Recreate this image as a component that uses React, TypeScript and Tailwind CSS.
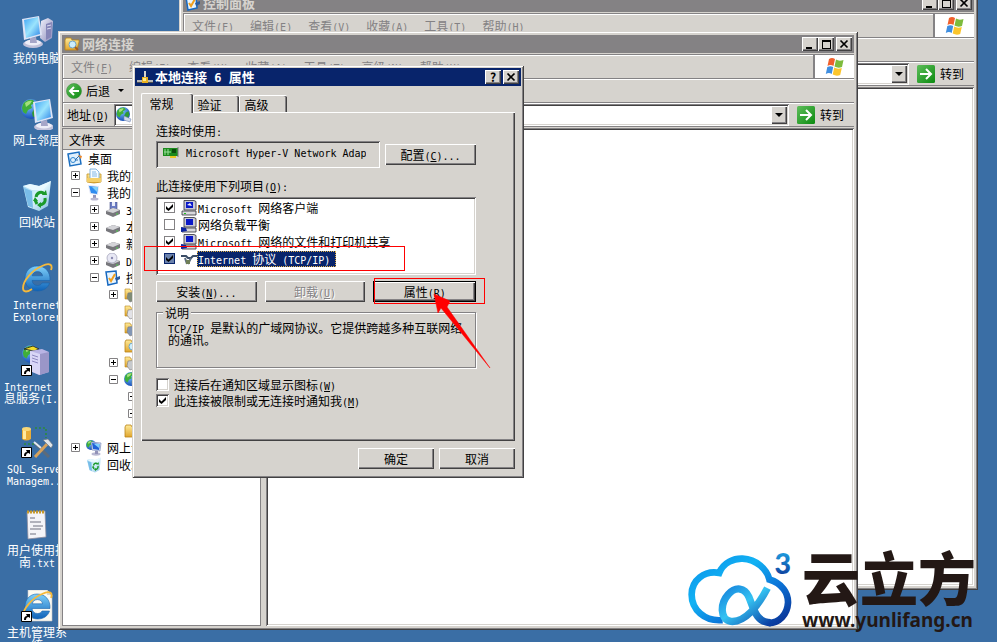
import type { ReactNode } from "react";

const RAISED =
  "bg-[#d6d3ce] shadow-[inset_1px_1px_0_#fff,inset_-1px_-1px_0_#424142,inset_-2px_-2px_0_#848284]";
const SUNKEN =
  "shadow-[inset_1px_1px_0_#848284,inset_-1px_-1px_0_#fff,inset_2px_2px_0_#424142,inset_-2px_-2px_0_#d6d3ce]";
const FRAME =
  "bg-[#d6d3ce] shadow-[inset_1px_1px_0_#d6d3ce,inset_-1px_-1px_0_#424142,inset_2px_2px_0_#fff,inset_-2px_-2px_0_#848284]";
const MONO = "font-['DejaVu_Sans_Mono','Noto_Sans_CJK_SC',monospace]";

// Half width characters take half of a Chinese character, "&" marks the hotkey.
function T({ children }: { children: string }) {
  const parts = children.split(/([\x20-\x7e]+)/).filter(Boolean);
  return (
    <span className="whitespace-pre">
      {parts.map((part, i) => {
        if (!/^[\x20-\x7e]/.test(part)) return part;
        const [before, after] = part.split("&");
        return (
          <span key={i} className={`text-[10px] leading-[0px] ${MONO}`}>
            {before}
            {after && <u>{after[0]}</u>}
            {after && after.slice(1)}
          </span>
        );
      })}
    </span>
  );
}

/* ---------- icons ---------- */

function Defs() {
  return (
    <svg className="absolute size-0" aria-hidden="true">
      <defs>
        <linearGradient id="screen" x1="0" y1="0" x2="1" y2="1">
          <stop offset="0" stopColor="#3fa4f4" />
          <stop offset=".5" stopColor="#9be4fd" />
          <stop offset="1" stopColor="#2b84e8" />
        </linearGradient>
        <linearGradient id="case" x1="0" y1="0" x2="1" y2="1">
          <stop offset="0" stopColor="#f1f1fb" />
          <stop offset="1" stopColor="#8c8cbc" />
        </linearGradient>
        <linearGradient id="ie" x1="0" y1="0" x2="0" y2="1">
          <stop offset="0" stopColor="#7fd0fa" />
          <stop offset="1" stopColor="#0d62b8" />
        </linearGradient>
        <linearGradient id="gold" x1="0" y1="0" x2="0" y2="1">
          <stop offset="0" stopColor="#ffeb9a" />
          <stop offset="1" stopColor="#e0a52c" />
        </linearGradient>
        <linearGradient id="go" x1="0" y1="0" x2="1" y2="1">
          <stop offset="0" stopColor="#5fbe5b" />
          <stop offset="1" stopColor="#0b8a10" />
        </linearGradient>
        <radialGradient id="globe" cx=".4" cy=".3" r=".8">
          <stop offset="0" stopColor="#7cc8ff" />
          <stop offset="1" stopColor="#0a3fae" />
        </radialGradient>
        <linearGradient id="bin" x1="0" y1="0" x2="1" y2="1">
          <stop offset="0" stopColor="#8fcdf0" />
          <stop offset=".5" stopColor="#dff5fd" />
          <stop offset="1" stopColor="#7db9e0" />
        </linearGradient>
        <linearGradient id="cloud" x1="0" y1="0" x2="1" y2="1">
          <stop offset="0" stopColor="#0a8fe8" />
          <stop offset=".35" stopColor="#12b3f4" />
          <stop offset=".65" stopColor="#0b74d8" />
          <stop offset="1" stopColor="#0a2f92" />
        </linearGradient>
        <linearGradient id="alpha" x1="0" y1="0" x2="1" y2="1">
          <stop offset="0" stopColor="#1583dc" />
          <stop offset=".45" stopColor="#35c3f2" />
          <stop offset="1" stopColor="#0a3fa4" />
        </linearGradient>
        <linearGradient id="three" x1="0" y1="0" x2="0" y2="1">
          <stop offset="0" stopColor="#22b8f2" />
          <stop offset="1" stopColor="#0a2f92" />
        </linearGradient>
      </defs>
    </svg>
  );
}

function Svg({ box = 32, className, children }: { box?: number; className: string; children: ReactNode }) {
  return (
    <svg viewBox={`0 0 ${box} ${box}`} className={`shrink-0 ${className}`} aria-hidden="true">
      {children}
    </svg>
  );
}

const Globe = ({ x = 10, y = 10, r = 10 }) => (
  <g transform={`translate(${x} ${y}) scale(${r / 10})`}>
    <circle r="10" fill="url(#globe)" />
    <path d="M-8-5 Q-4-10 2-9 L4-6 0-4 1-1-3 1-5 5-8 3-9-1Z" fill="#3fae3a" />
    <path d="M4-2 8-4 9 1 6 7 2 8 1 4Z" fill="#2f9a34" />
    <path d="M-6-6 Q-2-9 1-8 L-1-5-5-2Z" fill="#a4df7c" />
  </g>
);

const Monitor = () => (
  <g>
    <ellipse cx="12" cy="28" rx="10" ry="4" fill="#c2c2da" />
    <ellipse cx="12" cy="26.500" rx="8" ry="3" fill="#eeeef8" />
    <path d="M9 22 15 21 16 27 9 27Z" fill="#a6a6c8" />
    <path d="M1 3 18 0 21 19 3 24Z" fill="#dfe4f6" />
    <path d="M3 4 17 1 19 18 5 22Z" fill="url(#screen)" />
  </g>
);

const Shortcut = () => (
  <g>
    <path d="M.5 21.500h10v10H.5Z" fill="#fff" stroke="#000" />
    <path d="M3 30C3 27 4 26 6 26L5 24H9V28L7.500 27C6 27 5 28 5 30Z" fill="#000" />
  </g>
);

const IeMark = () => (
  <g>
    <path
      d="M16 4C8.500 4 4 10 4 16.500 4 24 9.500 29 16.500 29 22.500 29 27 26 28.500 21H21C20 22.800 18.500 23.500 16.500 23.500 13.500 23.500 11.300 21.500 11 18.500H29C29.500 10 24.500 4 16 4ZM11.200 13.800C11.800 11 14 9.600 16.400 9.600 19 9.600 21.200 11 21.600 13.800Z"
      fill="url(#ie)"
      stroke="#1a63ac"
      strokeWidth=".6"
    />
    <path
      d="M30 8C32 3 29 0 21 4 11 8 2 19 2 26 2 31 7 30 11 27"
      fill="none"
      stroke="#f6b93a"
      strokeWidth="1.800"
    />
  </g>
);

const DesktopComputer = () => (
  <Svg className="size-8">
    <path d="M20 5 27 2 32 5 31 22 24 26 19 22Z" fill="url(#case)" />
    <path d="M25 8 31 6 30 21 25 24Z" fill="#8585b8" />
    <path d="M26 10 30 9M26 13 30 12" stroke="#dcdcf2" />
    <Monitor />
  </Svg>
);

const NetworkPlaces = ({ className = "size-8" }) => (
  <Svg className={className}>
    <Globe x={10} y={11} r={10} />
    <g transform="translate(11 1)">
      <Monitor />
    </g>
  </Svg>
);

const RecycleBin = ({ className = "size-8" }) => (
  <Svg className={className}>
    <path d="M2 6 9 4 18 6 30 1 27 26 18 31 7 27Z" fill="url(#bin)" />
    <path d="M2 6 9 4 18 6 30 1 22 10 11 10Z" fill="#e9f9ff" />
    <path d="M3 8 11 11 12 28 7 26Z" fill="#79bde8" />
    <g fill="none" stroke="#1b9a2b" strokeWidth="3">
      <path d="M15 17C16 12 21 11 23 14" />
      <path d="M24 18C25 23 21 25 18 25" />
      <path d="M16 24 14 20" />
    </g>
    <path d="M21 15h5l-1-5ZM20 22v6l-4-3ZM12 21l2-4 3 4Z" fill="#1b9a2b" />
  </Svg>
);

const Explorer = () => (
  <Svg className="size-8">
    <IeMark />
  </Svg>
);

const ServerIcon = () => (
  <Svg className="size-8">
    <Globe x={10} y={10} r={9} />
    <path d="M3 5 12 2 18 5 13 7Z" fill="#f2dc2a" stroke="#1a1a1a" strokeWidth=".8" />
    <path d="M9 7 21 5 28 8 28 28 18 31 9 27Z" fill="#b9b4e4" />
    <path d="M9 7 19 10 19 31 9 27Z" fill="#d9d6f6" />
    <path d="M19 10 28 8 28 28 19 31Z" fill="#9a96c8" />
    <path d="M11 11 17 13M11 14 17 16M11 17 17 19" stroke="#8d88c0" />
    <Shortcut />
  </Svg>
);

const SqlIcon = () => (
  <Svg className="size-8">
    <path d="M1 3V13Q5 16 10 13V3Z" fill="#e8ac38" />
    <path d="M2 3V13H5V3Z" fill="#ffe9a0" />
    <ellipse cx="5.500" cy="3" rx="4.500" ry="2" fill="#f9d878" />
    <path d="M14 2H25V12M3 18H14" fill="none" stroke="#2c8a3c" strokeWidth="1.600" strokeDasharray="2 2" />
    <path d="M14 17 28 31" stroke="#5d6b7a" strokeWidth="3" />
    <path d="M13 16 20 22" stroke="#e3e9ef" strokeWidth="2" />
    <path d="M27 17 14 31" stroke="#d6a25c" strokeWidth="3" />
    <path d="M22 14 27 13 32 19 30 22 26 18Z" fill="#dfe5ea" stroke="#6b7783" strokeWidth=".7" />
    <Shortcut />
  </Svg>
);

const Notepad = () => (
  <Svg className="size-8">
    <path d="M6 4 24 3 25 29 7 31Z" fill="#f4f4f8" stroke="#8e8ea0" strokeWidth=".8" />
    <path d="M6 4H24" stroke="#c79a2a" strokeWidth="3" strokeDasharray="2 1" />
    <path d="M9 10H14M9 14H20M12 18H22M9 21H20M9 26H15" stroke="#6e7080" />
  </Svg>
);

const IeDocument = () => (
  <Svg className="size-8">
    <path d="M7 0H26L31 5V31H7Z" fill="#fbfaf2" stroke="#c8c8c8" strokeWidth=".6" />
    <path d="M26 0V5H31Z" fill="#d8d8d0" />
    <IeMark />
    <Shortcut />
  </Svg>
);

const Folder = ({ lens = true }) => (
  <Svg box={16} className="size-4">
    <path d="M1 4V14H13L15 6V4H8L7 2H2Z" fill="url(#gold)" stroke="#b98416" strokeWidth=".8" />
    {lens && <circle cx="8.500" cy="8.500" r="3.500" fill="#cdeefc" stroke="#6fa6c8" />}
    {lens && <path d="M11 11 14 14" stroke="#a65c1c" strokeWidth="2" />}
  </Svg>
);

const Documents = () => (
  <Svg box={16} className="size-4">
    <path d="M1 6V14Q8 16 15 14V6Z" fill="url(#gold)" stroke="#c69422" strokeWidth=".8" />
    <path d="M4 1H10L13 4V11H4Z" fill="#f4fbff" stroke="#6ba6d8" strokeWidth=".8" />
    <path d="M6 4H10M6 6H11M6 8H11" stroke="#68a8e0" strokeWidth=".8" />
    <path d="M1 10H15V14H1Z" fill="#f4cf68" />
  </Svg>
);

const SmallComputer = () => (
  <Svg box={16} className="size-4">
    <path d="M2 0 13 1 12 10 4 9Z" fill="#dfe5f6" />
    <path d="M3 1 12 2 11 9 5 8Z" fill="#2f8cf0" />
    <path d="M6 2 12 2 11 7Z" fill="#7fd0fa" />
    <path d="M7 10H10V13H7Z" fill="#9292b8" />
    <ellipse cx="8.500" cy="14" rx="4" ry="1.500" fill="#b8b8d2" />
  </Svg>
);

const NetworkSmall = () => (
  <Svg box={16} className="size-4">
    <Globe x={5} y={5} r={5} />
    <path d="M5 2 15 3 14 11 6 10Z" fill="#dfe5f6" stroke="#6a7cae" strokeWidth=".6" />
    <path d="M6 3 14 4 13 10 7 9Z" fill="#1f62d8" />
    <path d="M8 4 14 4 13 8Z" fill="#7fd0fa" />
    <ellipse cx="10" cy="14" rx="4.500" ry="1.700" fill="#b8b8d2" />
    <path d="M9 11H12V14H9Z" fill="#9292b8" />
  </Svg>
);

const DesktopSmall = () => (
  <Svg box={16} className="size-4">
    <path d="M1 3 12 1 14 13 3 15Z" fill="#dff0fd" stroke="#1c6fc0" strokeWidth="1.500" />
    <circle cx="6" cy="9" r="2.500" fill="none" stroke="#2f86d0" />
    <path d="M8 9 13 4M8 9H11" stroke="#2b6fae" />
    <path d="M11 4 15 5 14 8Z" fill="#f08a2c" />
  </Svg>
);

const Drive = ({ kind }: { kind?: string }) => (
  <Svg box={16} className="size-4">
    {kind === "floppy" && <path d="M5 0H12V8H5Z" fill="#6b7cc4" stroke="#46508c" strokeWidth=".6" />}
    {kind === "floppy" && <path d="M7 0H10V4H7Z" fill="#e8ecfa" />}
    <path d="M1 9 8 6 15 8 15 12 8 15 1 12Z" fill="#77777c" />
    <path d="M1 9 8 6 15 8 8 11Z" fill="#d4d4d8" />
    {kind === "disc" && <circle cx="7" cy="5" r="5" fill="#e8e8f4" stroke="#9c9cb4" strokeWidth=".7" />}
    {kind === "disc" && <circle cx="7" cy="5" r="1.200" fill="#8a8ab0" />}
    <path d="M11 12H13" stroke="#4fd04a" />
  </Svg>
);

const ControlIcon = () => (
  <Svg box={16} className="size-4">
    <path d="M1 2 11 1 12 13 3 15Z" fill="#e8f5ff" stroke="#1668c0" strokeWidth="1.500" />
    <path d="M4 8 6 11 10 4" fill="none" stroke="#f0a020" strokeWidth="2" />
    <path d="M10 8 15 6 15 9 11 11Z" fill="#2d5c9c" />
  </Svg>
);

const GlobeSmall = () => (
  <Svg box={16} className="size-4">
    <Globe x={7} y={7} r={7} />
    <path d="M8 9 15 12 14 15 8 13Z" fill="#cfd8ea" stroke="#7a8fb8" strokeWidth=".6" />
  </Svg>
);

const ToolFolder = ({ tint }: { tint: string }) => (
  <Svg box={16} className="size-4">
    <path d="M1 2H6L7 4H14V12H1Z" fill="url(#gold)" stroke="#b98416" strokeWidth=".6" />
    <path d="M4 6 13 5 14 12 6 15 3 11Z" fill={tint} stroke="#7c7c80" strokeWidth=".6" />
  </Svg>
);

const Flag = () => (
  <Svg box={20} className="size-5">
    <path d="M4 2Q7 0 10 2L8.500 9Q5.500 7 2.500 9Z" fill="#f0602c" />
    <path d="M11 2.500Q14 4.500 18.500 3L17 10Q13 11.500 9.500 9.500Z" fill="#7dbb3c" />
    <path d="M2.300 10Q5.500 8.500 8.200 10L6.700 17Q4 15 .8 17Z" fill="#3f8ee0" />
    <path d="M9.200 10.500Q12.500 12.500 16.800 11L15.200 18Q11.500 19.500 7.700 17.500Z" fill="#fbc52c" />
  </Svg>
);

const ConnectIcon = () => (
  <Svg box={16} className="size-4">
    <path d="M7 2H9V9H7Z" fill="#d6d3ce" />
    <path d="M0 11H16V13H0Z" fill="#b8b8b8" />
    <path d="M0 13.500H16" stroke="#505050" />
    <path d="M5 8H11V14H5Z" fill="#e8b020" />
    <path d="M6 9H9V12H6Z" fill="#ffe98a" />
  </Svg>
);

const AdapterIcon = () => (
  <Svg box={16} className="size-4">
    <path d="M0 3H15V11H0Z" fill="#1c8a1c" />
    <path d="M2 4V10M5 4V10M1 7H8" stroke="#9be09b" />
    <path d="M9 4H13V8H9Z" fill="#0b4c0b" />
    <path d="M7 11H13V13H7Z" fill="#e8c820" />
    <path d="M15 2V12" stroke="#7a7a7a" />
  </Svg>
);

const ClientIcon = ({ hand = false }) => (
  <Svg box={16} className="size-4">
    <path d="M3 .5H13L15 1.500V10H3Z" fill="#c8c8d4" stroke="#303038" strokeWidth=".8" />
    <path d="M5 2H12V8H5Z" fill="#0a18c8" />
    {!hand && <path d="M6 5 9 3 11 6Z" fill="#f0f0fa" />}
    <path d="M1 11H15V15H1Z" fill="#d8d8dc" stroke="#303038" strokeWidth=".8" />
    {hand && <path d="M0 10 5 11 6 14 0 15Z" fill="#0a22a0" />}
    {!hand && <path d="M3 13.500H5" stroke="#1cc01c" />}
  </Svg>
);

const ProtocolIcon = () => (
  <Svg box={16} className="size-4">
    <path d="M0 5H5L7 7H10L12 5H16" fill="none" stroke="#3a4c66" strokeWidth="2" />
    <path d="M4 7 6 13M10 7 7 13" stroke="#5c6c80" strokeWidth="2" />
    <path d="M5 9H9V13H5Z" fill="#6f7f58" />
  </Svg>
);

const Cross = () => (
  <Svg box={10} className="size-[10px]">
    <path d="M1.500 1.500 8.500 8.500M8.500 1.500 1.500 8.500" stroke="#000" strokeWidth="1.700" />
  </Svg>
);

/* ---------- controls ---------- */

function CaptionButton({ label, children }: { label: string; children: ReactNode }) {
  return (
    <button aria-label={label} className={`flex h-[14px] w-4 items-center justify-center ${RAISED}`}>
      {children}
    </button>
  );
}

function Button({ children, className = "" }: { children: string; className?: string }) {
  return (
    <button
      className={`h-[21px] text-[12px] leading-3 disabled:text-[#848284] disabled:[text-shadow:1px_1px_0_#fff] ${RAISED} ${className}`}
      disabled={children.startsWith("卸载")}
    >
      <T>{children}</T>
    </button>
  );
}

function Tick({ id, checked, kind = "flat" }: { id: string; checked: boolean; kind?: "flat" | "sunken" | "active" }) {
  const look = {
    flat: "size-[11px] border border-[#848284] bg-white",
    active: "size-[11px] border border-[#08246b] bg-[#6b82ad]",
    sunken: `size-[13px] bg-white ${SUNKEN}`,
  }[kind];
  return (
    <span className="grid shrink-0 place-items-center">
      <input id={id} type="checkbox" defaultChecked={checked} className={`col-start-1 row-start-1 appearance-none ${look}`} />
      {checked && (
        <svg viewBox="0 0 7 7" className="pointer-events-none col-start-1 row-start-1 size-[7px]" aria-hidden="true">
          <path d="M0 2 2.500 4.500 7 0V3L2.500 7 0 5Z" />
        </svg>
      )}
    </span>
  );
}

function GoButton() {
  return (
    <button className="flex items-center gap-[5px]">
      <Svg box={18} className="size-[18px]">
        <rect width="18" height="18" rx="1.500" fill="url(#go)" />
        <path d="M3 9H14M9 4 14 9 9 14" fill="none" stroke="#fff" strokeWidth="2" />
      </Svg>
      <T>转到</T>
    </button>
  );
}

type FrameProps = {
  title: string;
  icon: ReactNode;
  menus: string[];
  place: string;
  back?: boolean;
  children?: ReactNode;
};

function ExplorerWindow({ title, icon, menus, place, back, children }: FrameProps) {
  return (
    <section className={`absolute flex flex-col p-1 ${FRAME} ${place}`}>
      <header className="flex h-[18px] shrink-0 items-center bg-[#848284] px-[2px] text-[#d6d3ce]">
        {icon}
        <h2 className="ml-[2px] flex-1 text-[13px] leading-4 font-bold">{title}</h2>
        <CaptionButton label="最小化">
          <span className="mt-[7px] mr-[3px] h-[2px] w-[6px] bg-black" />
        </CaptionButton>
        <CaptionButton label="最大化">
          <span className="h-[9px] w-[9px] border border-t-2 border-black" />
        </CaptionButton>
        <span className="w-[2px]" />
        <CaptionButton label="关闭">
          <Cross />
        </CaptionButton>
      </header>

      <div className="mt-px mb-px shrink-0 border-t border-l border-[#848284]">
        <div className="flex h-6 border-b border-[#848284] shadow-[inset_1px_1px_0_#fff]">
          <nav className="flex flex-1 items-center text-[#848284]">
            {menus.map((menu) => (
              <button key={menu} className="px-2">
                <T>{menu}</T>
              </button>
            ))}
          </nav>
          <div className="flex w-[41px] items-center justify-center border-l-2 border-[#848284] bg-white">
            <Flag />
          </div>
        </div>
        <div className="flex h-6 items-center border-b border-[#848284] px-[3px] shadow-[inset_1px_1px_0_#fff]">
          {back && (
            <button className="flex items-center gap-1">
              <Svg box={16} className="size-4">
                <circle cx="8" cy="8" r="7.500" fill="url(#go)" stroke="#3c8c3c" strokeWidth=".6" />
                <path d="M13 8H4M8 4 4 8 8 12" fill="none" stroke="#fff" strokeWidth="2" />
              </Svg>
              <T>后退</T>
              <span className="ml-1 border-x-[3px] border-t-[3px] border-x-transparent border-t-black" />
            </button>
          )}
        </div>
        <div className="flex h-6 items-center border-b border-[#848284] pr-[10px] pl-1 shadow-[inset_1px_1px_0_#fff]">
          <label htmlFor={`address-${title}`} className="w-[47px]">
            <T>地址(&D)</T>
          </label>
          <div className={`mr-2 flex h-[22px] flex-1 items-center bg-white p-[2px] ${SUNKEN}`}>
            <GlobeSmall />
            <input id={`address-${title}`} defaultValue={title} className="min-w-0 flex-1 pl-1 outline-none" />
            <button aria-label="地址列表" className={`flex h-[18px] w-4 items-center justify-center ${RAISED}`}>
              <span className="border-x-4 border-t-4 border-x-transparent border-t-black" />
            </button>
          </div>
          <GoButton />
        </div>
      </div>
      {children}
    </section>
  );
}

/* ---------- folder tree ---------- */

type Node = { level: number; box?: "+" | "-"; icon?: ReactNode; name?: string };

const tree: Node[] = [
  { level: 0, icon: <DesktopSmall />, name: "桌面" },
  { level: 1, box: "+", icon: <Documents />, name: "我的文档" },
  { level: 1, box: "-", icon: <SmallComputer />, name: "我的电脑" },
  { level: 2, box: "+", icon: <Drive kind="floppy" />, name: "3.5 软盘 (A:)" },
  { level: 2, box: "+", icon: <Drive />, name: "本地磁盘 (C:)" },
  { level: 2, box: "+", icon: <Drive />, name: "新加卷 (D:)" },
  { level: 2, box: "+", icon: <Drive kind="disc" />, name: "DVD 驱动器 (E:)" },
  { level: 2, box: "-", icon: <ControlIcon />, name: "控制面板" },
  { level: 3, box: "+", icon: <ToolFolder tint="#7f8c78" /> },
  { level: 3, icon: <ToolFolder tint="#e2e2e6" /> },
  { level: 3, icon: <ToolFolder tint="#8296b4" /> },
  { level: 3, icon: <Folder /> },
  { level: 3, box: "+", icon: <ToolFolder tint="#c6c9cc" /> },
  { level: 3, box: "-", icon: <GlobeSmall /> },
  { level: 4, box: "-" },
  { level: 4, box: "-" },
  { level: 3, icon: <Folder lens={false} /> },
  { level: 1, box: "+", icon: <NetworkSmall />, name: "网上邻居" },
  { level: 1, icon: <RecycleBin className="size-4" />, name: "回收站" },
];

const indent = ["pl-1", "pl-2", "pl-[27px]", "pl-[46px]", "pl-[65px]"];

function Tree() {
  return (
    <ul>
      {tree.map((node, i) => (
        <li key={i} className={`flex h-[17px] items-center ${indent[node.level]}`}>
          {node.level > 0 && (
            <span className="mr-[6px] flex size-[9px] shrink-0 items-center justify-center">
              {node.box && (
                <svg viewBox="0 0 9 9" className="size-[9px]" aria-hidden="true">
                  <path d="M.5.5h8v8h-8Z" fill="#fff" stroke="#848284" />
                  <path d={node.box === "+" ? "M2 4.500h5M4.500 2v5" : "M2 4.500h5"} stroke="#000" />
                </svg>
              )}
            </span>
          )}
          {node.icon}
          {node.name && (
            <span className="ml-[5px]">
              <T>{node.name}</T>
            </span>
          )}
        </li>
      ))}
    </ul>
  );
}

/* ---------- properties dialog ---------- */

const items = [
  { name: "Microsoft 网络客户端", icon: <ClientIcon />, checked: true },
  { name: "网络负载平衡", icon: <ClientIcon hand />, checked: false },
  { name: "Microsoft 网络的文件和打印机共享", icon: <ClientIcon hand />, checked: true },
  { name: "Internet 协议 (TCP/IP)", icon: <ProtocolIcon />, checked: true, selected: true },
];

function PropertiesDialog() {
  const tab =
    "rounded-t-[2px] border-t border-l border-white shadow-[inset_-1px_0_0_#424142,inset_-2px_0_0_#848284]";
  return (
    <section role="dialog" aria-label="本地连接 6 属性" className={`absolute top-[65px] left-[132px] w-[392px] p-[3px] ${FRAME}`}>
      <header className="flex h-[18px] items-center bg-[#08246b] px-[2px] text-white">
        <ConnectIcon />
        <h1 className="ml-[2px] flex-1 text-[13px] leading-4 font-bold">
          本地连接<span className={`text-[12px] leading-[0px] whitespace-pre ${MONO}`}> 6 </span>属性
        </h1>
        <CaptionButton label="帮助">
          <span className="text-[12px] leading-3 font-bold text-black">?</span>
        </CaptionButton>
        <span className="w-[2px]" />
        <CaptionButton label="关闭">
          <Cross />
        </CaptionButton>
      </header>

      <div className="px-[6px] pt-[7px] pb-[6px]">
        <div role="tablist" className="flex items-end">
          <button role="tab" aria-selected="true" className={`z-10 -mb-px h-5 w-[52px] bg-[#d6d3ce] pr-[12px] ${tab}`}>
            <T>常规</T>
          </button>
          <button role="tab" className={`h-[17px] w-[46px] pr-[14px] ${tab}`}>
            <T>验证</T>
          </button>
          <button role="tab" className={`h-[17px] w-12 pr-[14px] ${tab}`}>
            <T>高级</T>
          </button>
        </div>

        <div className={`pt-3 pr-[39px] pb-[34px] pl-[15px] ${RAISED}`}>
          <label htmlFor="adapter" className="block">
            <T>连接时使用:</T>
          </label>
          <div className="mt-1 flex items-center gap-[5px]">
            <div className="flex h-[27px] flex-1 items-center pr-[14px] pb-[3px] pl-[7px] shadow-[inset_1px_1px_0_#848284,inset_-1px_-1px_0_#fff,inset_2px_2px_0_#424142]">
              <AdapterIcon />
              <input
                id="adapter"
                readOnly
                value="Microsoft Hyper-V Network Adapter"
                className={`ml-[7px] min-w-0 flex-1 text-[10px] outline-none ${MONO}`}
              />
            </div>
            <Button className="w-[91px]">配置(&C)...</Button>
          </div>

          <p id="items-label" className="mt-[11px]">
            <T>此连接使用下列项目(&O):</T>
          </p>
          <ul aria-labelledby="items-label" className={`mt-[5px] bg-white px-2 pt-[2px] pb-2 ${SUNKEN}`}>
            {items.map((item, i) => (
              <li key={item.name} className="flex h-[17px] items-center">
                <Tick id={`item-${i}`} checked={item.checked} kind={item.selected ? "active" : "flat"} />
                <span className="ml-[6px] flex">{item.icon}</span>
                <label
                  htmlFor={`item-${i}`}
                  className={
                    item.selected
                      ? "flex h-4 items-center bg-[#08246b] pr-[6px] pl-px text-white outline-1 -outline-offset-1 outline-[#e0b048] outline-dotted"
                      : "flex h-4 items-center pl-px"
                  }
                >
                  <T>{item.name}</T>
                </label>
              </li>
            ))}
          </ul>

          <div className="mt-[6px] flex gap-2">
            <Button className="flex-1">安装(&N)...</Button>
            <Button className="flex-1">卸载(&U)</Button>
            <Button className="flex-1 border border-black">属性(&R)</Button>
          </div>

          <fieldset className="mt-1 h-[62px] border border-[#848284] pl-[11px] shadow-[1px_1px_0_#fff,inset_1px_1px_0_#fff]">
            <legend className="-ml-[5px] bg-[#d6d3ce] px-[2px]">
              <T>说明</T>
            </legend>
            <p className="mt-[3px] leading-3">
              <T>TCP/IP 是默认的广域网协议。它提供跨越多种互联网络</T>
              <br />
              <T>的通讯。</T>
            </p>
          </fieldset>

          <div className="mt-[10px] flex flex-col gap-[3px]">
            <div className="flex items-center gap-[5px]">
              <Tick id="show-icon" checked={false} kind="sunken" />
              <label htmlFor="show-icon">
                <T>连接后在通知区域显示图标(&W)</T>
              </label>
            </div>
            <div className="flex items-center gap-[5px]">
              <Tick id="notify" checked kind="sunken" />
              <label htmlFor="notify">
                <T>此连接被限制或无连接时通知我(&M)</T>
              </label>
            </div>
          </div>
        </div>

        <div className="mt-[7px] flex justify-end gap-[5px]">
          <Button className="w-[76px]">确定</Button>
          <Button className="w-[76px]">取消</Button>
        </div>
      </div>
    </section>
  );
}

/* ---------- desktop ---------- */

const shortcuts = [
  { icon: <DesktopComputer />, lines: ["我的电脑"] },
  { icon: <NetworkPlaces />, lines: ["网上邻居"] },
  { icon: <RecycleBin />, lines: ["回收站"] },
  { icon: <Explorer />, lines: ["Internet", "Explorer"] },
  { icon: <ServerIcon />, lines: ["Internet 信", "息服务(I..."] },
  { icon: <SqlIcon />, lines: ["SQL Server", "Managem..."] },
  { icon: <Notepad />, lines: ["用户使用指", "南.txt"] },
  { icon: <IeDocument />, lines: ["主机管理系", "统"] },
];

function Brand() {
  return (
    <div className="absolute right-[21px] bottom-[10px] flex items-end gap-2 text-[#231815]">
      <svg viewBox="45 65 325 230" className="mb-1 h-[77px] w-[108px]" aria-label="云立方">
        <path
          d="M155 272C100 277 62 240 62 195C62 152 100 122 145 130C158 98 190 86 215 87C258 90 288 118 296 150C334 162 353 190 352 220C350 256 325 281 294 281"
          fill="none"
          stroke="url(#cloud)"
          strokeWidth="20"
        />
        <path
          d="M290 176C262 230 222 280 180 276C146 270 148 222 172 195C194 170 222 174 234 202C248 236 256 280 300 280"
          fill="none"
          stroke="url(#alpha)"
          strokeWidth="22"
        />
        <text x="311" y="132" fontSize="86" fontWeight="900" fill="url(#three)" fontFamily="Lato, sans-serif">
          3
        </text>
      </svg>
      <div>
        <p className="mb-[7px] font-['Noto_Sans_CJK_SC',sans-serif] text-[58px] leading-[50px] font-black">云立方</p>
        <p className="font-['Noto_Sans',sans-serif] text-[19px] leading-6 font-bold">www.yunlifang.cn</p>
      </div>
    </div>
  );
}

export default function App() {
  return (
    <main className="relative h-screen overflow-hidden bg-[#3a6ea5] font-['Noto_Sans_CJK_SC','Liberation_Sans',sans-serif] text-[12px] leading-[13px] text-black">
      <Defs />
      <ul className="flex w-[74px] flex-col pt-4">
        {shortcuts.map((item) => (
          <li key={item.lines.join("")} className="flex h-[82px] flex-col items-center text-white">
            {item.icon}
            <a href="#" className="mt-1 flex flex-col items-center leading-3">
              {item.lines.map((line) => (
                <T key={line}>{line}</T>
              ))}
            </a>
          </li>
        ))}
      </ul>

      <ExplorerWindow
        title="控制面板"
        icon={<ControlIcon />}
        menus={["文件(F)", "编辑(E)", "查看(V)", "收藏(A)", "工具(T)", "帮助(H)"]}
        place="-top-[10px] right-[19px] bottom-[52px] left-[179px]"
      >
        <div className={`flex-1 bg-white ${SUNKEN}`} />
      </ExplorerWindow>

      <ExplorerWindow
        title="网络连接"
        icon={<Folder />}
        menus={["文件(&F)", "编辑(&E)", "查看(&V)", "收藏(&A)", "工具(&T)", "高级(&N)", "帮助(&H)"]}
        place="top-[31px] right-[139px] bottom-[12px] left-[58px]"
        back
      >
        <div className="flex min-h-0 flex-1 gap-[5px]">
          <aside className="w-[199px] overflow-hidden border border-[#848284] bg-white">
            <h3 className="flex h-[21px] items-center border-b border-[#848284] bg-[#d6d3ce] pl-[6px]">文件夹</h3>
            <Tree />
          </aside>
          <div className={`flex-1 bg-white ${SUNKEN}`} />
        </div>
      </ExplorerWindow>

      <PropertiesDialog />

      {/* markers over the dialog */}
      <div className="pointer-events-none absolute top-[246px] left-[144px] h-[25px] w-[261px] border border-[#ff0000]" />
      <div className="pointer-events-none absolute top-[278px] left-[374px] h-[26px] w-[111px] border border-[#ff0000]" />
      <svg viewBox="0 0 58 76" className="pointer-events-none absolute top-[293px] left-[433px] h-[76px] w-[58px]" aria-hidden="true">
        <path d="M1 1 17 8 14 14 57 75 8 15 5 20Z" fill="#f00" stroke="#f00" strokeWidth=".5" />
      </svg>

      <Brand />
    </main>
  );
}
